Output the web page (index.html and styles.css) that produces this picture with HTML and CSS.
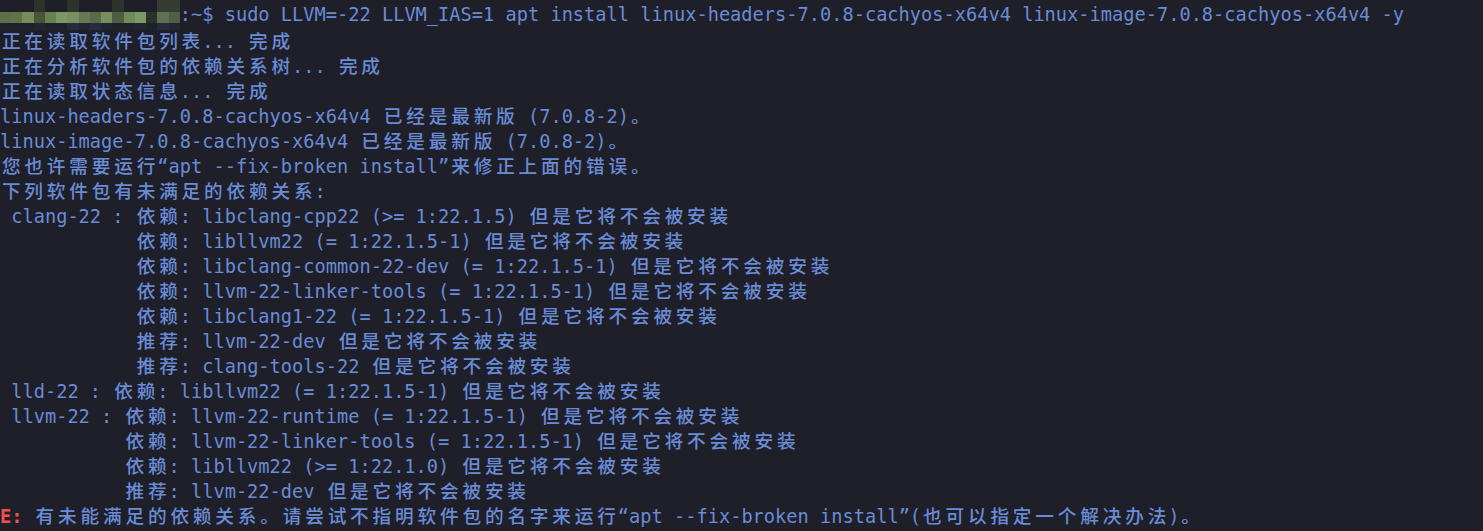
FILE: index.html
```html
<!DOCTYPE html>
<html lang="zh-CN">
<head>
<meta charset="utf-8">
<title>Terminal</title>
<link rel="stylesheet" href="styles.css">
</head>
<body>
<div class="term">
<div class="line prompt"><div class="mosaic">
<i class="m0"></i><i class="m0"></i><i class="m0"></i><i class="m1"></i><i class="m0"></i><i class="m0"></i><i class="m1"></i><i class="m0"></i><i class="m0"></i><i class="m0"></i><i class="m1"></i><i class="m0"></i><i class="m0"></i><i class="m0"></i><i class="m2"></i><i class="m2"></i>
<i class="g0"></i><i class="g1"></i><i class="g2"></i><i class="g3"></i><i class="g4"></i><i class="g5"></i><i class="g6"></i><i class="g7"></i><i class="g8"></i><i class="g9"></i><i class="g10"></i><i class="g11"></i><i class="g12"></i><i class="g13"></i><i class="g14"></i><i class="g15"></i>
<i class="b0"></i><i class="b0"></i><i class="b0"></i><i class="b1"></i><i class="b0"></i><i class="b0"></i><i class="b2"></i><i class="b1"></i><i class="b2"></i><i class="b1"></i><i class="b0"></i><i class="b0"></i><i class="b1"></i><i class="b0"></i><i class="b2"></i><i class="b1"></i>
</div><span>:~$ sudo LLVM=-22 LLVM_IAS=1 apt install linux-headers-7.0.8-cachyos-x64v4 linux-image-7.0.8-cachyos-x64v4 -y</span></div>
<div class="line"><span class="w">正在读取软件包列表</span>... <span class="w">完成</span></div>
<div class="line"><span class="w">正在分析软件包的依赖关系树</span>... <span class="w">完成</span></div>
<div class="line"><span class="w">正在读取状态信息</span>... <span class="w">完成</span></div>
<div class="line">linux-headers-7.0.8-cachyos-x64v4 <span class="w">已经是最新版</span> (7.0.8-2)<span class="w">。</span></div>
<div class="line">linux-image-7.0.8-cachyos-x64v4 <span class="w">已经是最新版</span> (7.0.8-2)<span class="w">。</span></div>
<div class="line"><span class="w">您也许需要运行</span>“apt --fix-broken install”<span class="w">来修正上面的错误。</span></div>
<div class="line"><span class="w">下列软件包有未满足的依赖关系</span>:</div>
<div class="line"> clang-22 : <span class="w">依赖</span>: libclang-cpp22 (&gt;= 1:22.1.5) <span class="w">但是它将不会被安装</span></div>
<div class="line">            <span class="w">依赖</span>: libllvm22 (= 1:22.1.5-1) <span class="w">但是它将不会被安装</span></div>
<div class="line">            <span class="w">依赖</span>: libclang-common-22-dev (= 1:22.1.5-1) <span class="w">但是它将不会被安装</span></div>
<div class="line">            <span class="w">依赖</span>: llvm-22-linker-tools (= 1:22.1.5-1) <span class="w">但是它将不会被安装</span></div>
<div class="line">            <span class="w">依赖</span>: libclang1-22 (= 1:22.1.5-1) <span class="w">但是它将不会被安装</span></div>
<div class="line">            <span class="w">推荐</span>: llvm-22-dev <span class="w">但是它将不会被安装</span></div>
<div class="line">            <span class="w">推荐</span>: clang-tools-22 <span class="w">但是它将不会被安装</span></div>
<div class="line"> lld-22 : <span class="w">依赖</span>: libllvm22 (= 1:22.1.5-1) <span class="w">但是它将不会被安装</span></div>
<div class="line"> llvm-22 : <span class="w">依赖</span>: llvm-22-runtime (= 1:22.1.5-1) <span class="w">但是它将不会被安装</span></div>
<div class="line">           <span class="w">依赖</span>: llvm-22-linker-tools (= 1:22.1.5-1) <span class="w">但是它将不会被安装</span></div>
<div class="line">           <span class="w">依赖</span>: libllvm22 (&gt;= 1:22.1.0) <span class="w">但是它将不会被安装</span></div>
<div class="line">           <span class="w">推荐</span>: llvm-22-dev <span class="w">但是它将不会被安装</span></div>
<div class="line"><span class="err">E:</span> <span class="w">有未能满足的依赖关系。请尝试不指明软件包的名字来运行</span>“apt --fix-broken install”(<span class="w">也可以指定一个解决办法</span>)<span class="w">。</span></div>
</div>
</body>
</html>
```

FILE: styles.css
```css
html, body {
  margin: 0;
  padding: 0;
  background: #1e1f29;
}

.term {
  padding-top: 2px;
  font-family: "DejaVu Sans Mono", "Noto Sans CJK SC", monospace;
  font-size: 18.667px;
  line-height: 25px;
  color: #6a8bd6;
  height: 529px;
  overflow: hidden;
}

.line {
  white-space: pre;
  height: 25px;
}

.prompt {
  display: flex;
  align-items: flex-start;
}

.w {
  font-family: "Noto Sans CJK SC", sans-serif;
  font-weight: 500;
  letter-spacing: 3.81px;
  padding-left: 1.9px;
  margin-right: -1.9px;
}

.err {
  color: #f2504f;
  font-weight: bold;
}

.mosaic {
  display: grid;
  grid-template-columns: repeat(16, 11.238px);
  grid-template-rows: 12px 11px 7px;
  margin-top: -2px;
  margin-bottom: -3px;
}

.mosaic i { display: block; }

.m0 { background: #1e1f29; }
.m1 { background: #2c332b; }
.m2 { background: #343c34; }

.g0 { background: #5c6f47; }
.g1 { background: #5f7248; }
.g2 { background: #748e5a; }
.g3 { background: #4a5538; }
.g4 { background: #6b8050; }
.g5 { background: #7b9862; }
.g6 { background: #788f60; }
.g7 { background: #647a55; }
.g8 { background: #5a6a48; }
.g9 { background: #778f5b; }
.g10 { background: #4d5d44; }
.g11 { background: #6f8b58; }
.g12 { background: #7c9a66; }
.g13 { background: #2b3029; }
.g14 { background: #5e6f52; }
.g15 { background: #4f5f48; }

.b0 { background: #1f212b; }
.b1 { background: #222631; }
.b2 { background: #262c3e; }
```
